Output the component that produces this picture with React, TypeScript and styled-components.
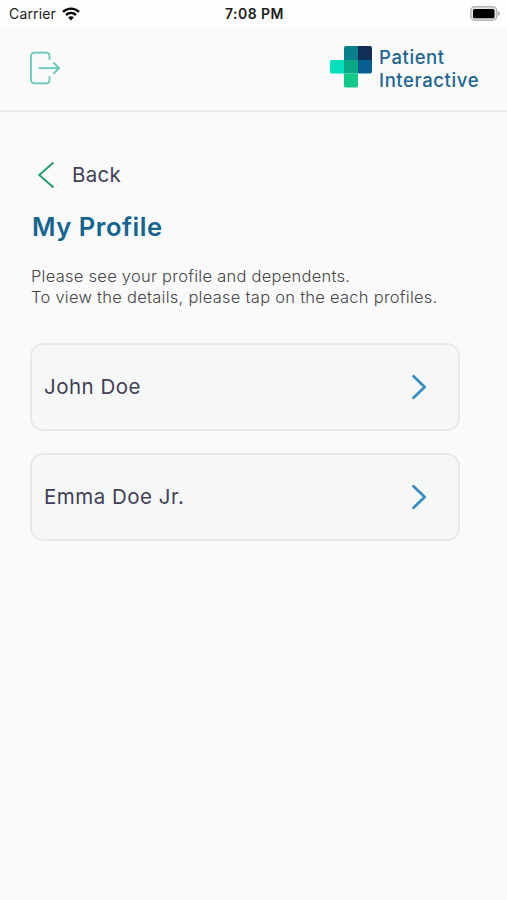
import React from "react";
import styled, { createGlobalStyle } from "styled-components";

const GlobalStyle = createGlobalStyle`
  * { box-sizing: border-box; }
  body { margin: 0; background: #fafafa; font-family: Inter, "Liberation Sans", sans-serif; }
  svg { display: block; flex: none; }
`;

const Screen = styled.div`
  width: 100%;
  min-height: 900px;
  background: #fafafa;
  overflow: hidden;
`;

const StatusBar = styled.div`
  display: grid;
  grid-template-columns: 1fr auto 1fr;
  align-items: center;
  height: 28px;
  padding: 0 7px 1px 9px;
  background: #fefefe;
  color: #1c1c1c;
  font-size: 14px;
  line-height: 20px;
`;

const Carrier = styled.div`
  display: flex;
  align-items: center;
  gap: 6px;
  letter-spacing: 0.15px;
`;

const Time = styled.div`
  font-size: 14px;
  font-weight: 600;
  letter-spacing: 0.45px;
`;

const Battery = styled.div`
  justify-self: end;
`;

const Header = styled.header`
  display: flex;
  justify-content: space-between;
  align-items: flex-start;
  height: 84px;
  padding: 18px 27px 0 29px;
  border-bottom: 2px solid #ebebeb;
`;

const LogoutButton = styled.button`
  margin: 5px 0 0;
  padding: 0;
  border: 0;
  background: none;
`;

const Brand = styled.div`
  display: flex;
  gap: 7px;
`;

const BrandName = styled.div`
  width: 101px;
  color: #1d6692;
  font-size: 18.5px;
  font-weight: 500;
  line-height: 23px;
  letter-spacing: 0.6px;
  white-space: nowrap;
`;

const Content = styled.main`
  padding: 49px 47px 0 30px;
`;

const BackLink = styled.button`
  display: flex;
  align-items: center;
  gap: 16px;
  height: 28px;
  margin: 0;
  padding: 0 0 0 8px;
  border: 0;
  background: none;
  color: #414057;
  font: 400 20.5px/28px Inter, sans-serif;
  letter-spacing: 0.3px;
`;

const Title = styled.h1`
  margin: 22px 0 0 2px;
  color: #14648f;
  font-size: 25.5px;
  font-weight: 600;
  line-height: 32px;
  letter-spacing: 0.55px;
`;

const Description = styled.p`
  margin: 23px 0 0 1px;
  color: #464646;
  font-size: 16.5px;
  font-weight: 300;
  line-height: 21px;
  letter-spacing: 0.26px;
  white-space: nowrap;
`;

const ProfileList = styled.div`
  display: grid;
  gap: 22px;
  margin-top: 35px;
`;

const ProfileCard = styled.button`
  display: flex;
  align-items: center;
  justify-content: space-between;
  height: 88px;
  padding: 0 31px 0 12px;
  border: 2px solid #e8eaea;
  border-radius: 13px;
  background: #f6f8f8;
  color: #414057;
  font: 400 20.5px/28px Inter, sans-serif;
`;

const ProfileName = styled.span`
  letter-spacing: 0.5px;
`;

const profiles = ["John Doe", "Emma Doe Jr."];

const WifiIcon = () => (
  <svg width="18" height="14" viewBox="0 0 18 14" fill="none" stroke="#080808" strokeWidth="2.4">
    <path d="M1 4.9C5.6.5 12.4.5 17 4.9" />
    <path d="M4 8c2.9-2.7 7.1-2.7 10 0" />
    <path d="m6.2 10.4 2.8 3 2.8-3C10.2 9 7.8 9 6.2 10.4Z" fill="#080808" stroke="none" />
  </svg>
);

const BatteryIcon = () => (
  <svg width="31" height="15" viewBox="0 0 31 15">
    <rect x="1.8" y=".8" width="26" height="13.4" rx="4" fill="#e7e7e7" stroke="#b5b5b5" strokeWidth="1.4" />
    <rect x="4" y="3" width="21.500" height="9.3" rx="1.5" fill="#000" />
    <path d="M29 5.2c2.4.8 2.4 3.8 0 4.6Z" fill="#aaa" />
  </svg>
);

const LogoutIcon = () => (
  <svg width="32" height="36" viewBox="0 0 32 36" fill="none" stroke="#65c7b8" strokeWidth="1.8" strokeLinecap="round" strokeLinejoin="round">
    <path d="M20.5 8.2V5c0-2-1.2-3.400-3.200-3.400H6C3.400 1.600 1.900 3.100 1.900 5.700v22.600c0 2.600 1.500 4.100 4.100 4.100h11.300c2 0 3.200-1.400 3.200-3.400v-3.200" />
    <path d="M10.300 17.200h19.800M24.800 12l5.400 5.200-5.400 5.200" />
  </svg>
);

const BrandMark = () => (
  <svg width="42" height="42" viewBox="0 0 42 42">
    <path d="M14 14H1.500Q0 14 0 15.500V26q0 1.500 1.500 1.500H14Z" fill="#05dfbb" />
    <path d="M28 0H16q-2 0-2 2v12h14Z" fill="#087f8c" />
    <path d="M28 0h12q2 0 2 2v12H28Z" fill="#102e58" />
    <path d="M28 14h14v11.500q0 2-2 2H28Z" fill="#075f91" />
    <path d="M14 14h14v13.500H14Z" fill="#08a885" />
    <path d="M14 27.500h14V40q0 1.500-1.500 1.500h-11Q14 41.500 14 40Z" fill="#12c989" />
  </svg>
);

const BackIcon = () => (
  <svg width="18" height="28" viewBox="0 0 18 28" fill="none" stroke="#219b75" strokeWidth="2">
    <path d="M15.500 1.500 1.200 14l14.300 12.500" />
  </svg>
);

const ForwardIcon = () => (
  <svg width="16" height="26" viewBox="0 0 16 26" fill="none" stroke="#388fc3" strokeWidth="2.800" strokeLinecap="round" strokeLinejoin="round">
    <path d="M2.500 2.200 13.700 13 2.500 23.800" />
  </svg>
);

export default function App() {
  return (
    <Screen>
      <GlobalStyle />
      <StatusBar>
        <Carrier>Carrier <WifiIcon /></Carrier>
        <Time>7:08 PM</Time>
        <Battery><BatteryIcon /></Battery>
      </StatusBar>
      <Header>
        <LogoutButton aria-label="Log out"><LogoutIcon /></LogoutButton>
        <Brand>
          <BrandMark />
          <BrandName>Patient<br />Interactive</BrandName>
        </Brand>
      </Header>
      <Content>
        <BackLink><BackIcon />Back</BackLink>
        <Title>My Profile</Title>
        <Description>
          Please see your profile and dependents.<br />
          To view the details, please tap on the each profiles.
        </Description>
        <ProfileList>
          {profiles.map((name) => (
            <ProfileCard key={name}>
              <ProfileName>{name}</ProfileName>
              <ForwardIcon />
            </ProfileCard>
          ))}
        </ProfileList>
      </Content>
    </Screen>
  );
}
